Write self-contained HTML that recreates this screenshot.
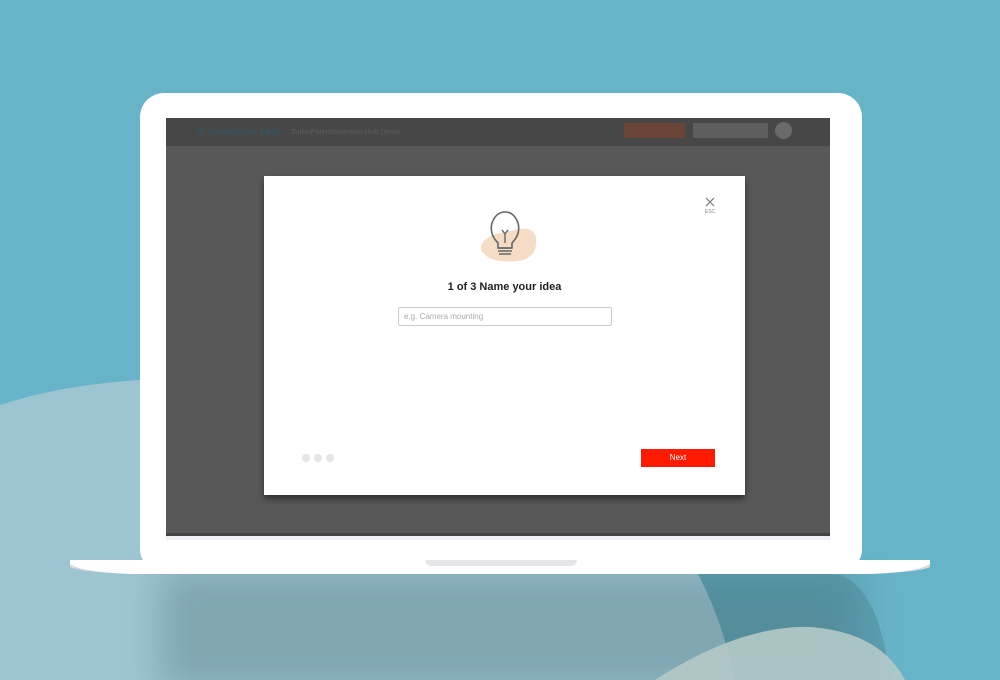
<!DOCTYPE html>
<html><head><style>
*{margin:0;padding:0;box-sizing:border-box}
body{width:1000px;height:680px;overflow:hidden;background:#67b3c8;position:relative;font-family:"Liberation Sans",sans-serif}
.abs{position:absolute}
</style></head><body>
<svg class="abs" style="left:0;top:0" width="1000" height="680">
<defs>
<filter id="bl"><feGaussianBlur stdDeviation="18"/></filter>
</defs>
<path d="M140 380 Q560 360 690 560 Q730 620 735 680 L0 680 L0 405 Q60 385 140 380Z" fill="#9dc5d1"/>
<path d="M690 560 Q720 610 735 680 L890 680 Q880 590 840 575Z" fill="#5a9fb1"/>
<rect x="160" y="570" width="700" height="120" fill="#4a6e78" opacity=".35" filter="url(#bl)"/>
<path d="M655 680 Q740 625 810 627 Q880 632 905 680Z" fill="#b4c9c8" opacity=".9"/>
</svg>
<div class="abs" style="left:140px;top:93px;width:722px;height:480px;background:#fff;border-radius:24px"></div>
<div class="abs" style="left:166px;top:118px;width:664px;height:418px;background:#585858;border-bottom:3px solid #444"></div>
<div class="abs" style="left:166px;top:536px;width:664px;height:4px;background:#eef0f4"></div>
<div class="abs" style="left:166px;top:118px;width:664px;height:28px;background:#474747"></div>
<div class="abs" style="left:196px;top:125px;color:#37535e;font-size:11px;font-weight:bold">✳ Invention Hub</div>
<div class="abs" style="left:291px;top:127px;color:#5e5e5e;font-size:7.5px">TurboPatentInvention Hub Demo</div>
<div class="abs" style="left:624px;top:123px;width:61px;height:15px;background:#6a4436"></div>
<div class="abs" style="left:693px;top:123px;width:75px;height:15px;background:#5e5e5e"></div>
<div class="abs" style="left:775px;top:122px;width:17px;height:17px;border-radius:50%;background:#6a6a6a"></div>
<div class="abs" style="left:264px;top:176px;width:481px;height:319px;background:#fff;box-shadow:0 4px 6px rgba(0,0,0,.45)"></div>
<svg class="abs" style="left:700px;top:196px" width="20" height="20"><path d="M6 2 L14 10 M14 2 L6 10" stroke="#777" stroke-width="1.2"/><text x="10" y="17" font-size="5" fill="#888" text-anchor="middle" font-family="Liberation Sans">ESC</text></svg>
<svg class="abs" style="left:475px;top:208px" width="70" height="60">
<path d="M6 38 Q10 26 36 23 Q58 16 61 30 Q63 50 43 53 Q14 56 6 42Z" fill="#f4dcc5"/>
<path d="M23 35 Q14 26 17 15 Q21 4 30 4 Q39 4 43 15 Q46 26 37 35 L37 40 L23 40Z" fill="none" stroke="#666" stroke-width="1.6"/>
<path d="M27 22 L30 26 L33 22 M30 26 L30 35" fill="none" stroke="#666" stroke-width="1.4"/>
<path d="M23 40 L37 40 M23 43 L37 43 M24 46 L36 46" stroke="#666" stroke-width="1.6"/>
</svg>
<div class="abs" style="left:264px;top:281px;width:481px;text-align:center;font-size:11px;font-weight:bold;color:#222">1 of 3 Name your idea</div>
<div class="abs" style="left:398px;top:307px;width:214px;height:19px;border:1px solid #ccc;border-radius:2px;font-size:8px;color:#aaa;padding:4px 5px">e.g. Camera mounting</div>
<div class="abs" style="left:302px;top:454px;width:8px;height:8px;border-radius:50%;background:#e4e4e4"></div>
<div class="abs" style="left:314px;top:454px;width:8px;height:8px;border-radius:50%;background:#e4e4e4"></div>
<div class="abs" style="left:326px;top:454px;width:8px;height:8px;border-radius:50%;background:#e4e4e4"></div>
<div class="abs" style="left:641px;top:449px;width:74px;height:18px;background:#ff1a00;color:#fff;font-size:8px;text-align:center;line-height:18px">Next</div>
<svg class="abs" style="left:70px;top:558px" width="860" height="20">
<path d="M0 2 L860 2 L860 6 Q850 14 800 16 L60 16 Q10 14 0 6Z" fill="#fff"/>
<path d="M0 9 Q10 14 60 16 L800 16 Q850 14 860 9 L860 6 Q850 14 800 16 L60 16 Q10 14 0 6Z" fill="#d8d8de"/>
<path d="M355 2 L507 2 Q506 8 500 8 L361 8 Q356 8 355 2Z" fill="#e6e6ea"/>
</svg>
</body></html>
